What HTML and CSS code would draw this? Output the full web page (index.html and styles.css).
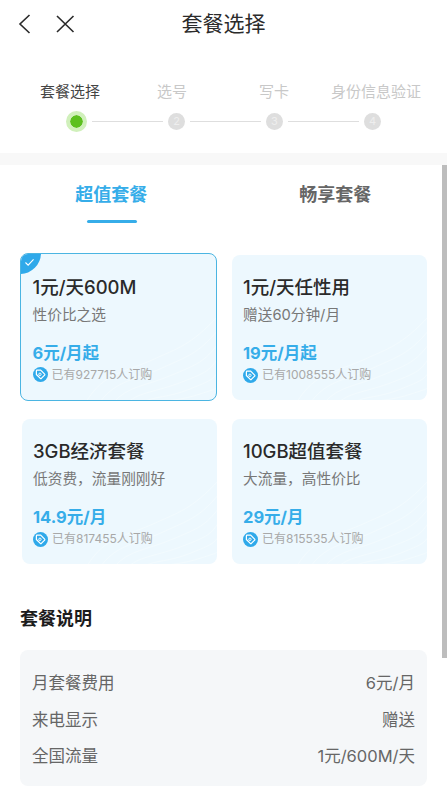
FILE: index.html
```html
<!DOCTYPE html>
<html lang="zh">
<head>
<meta charset="utf-8">
<title>套餐选择</title>
<link rel="stylesheet" href="styles.css">
</head>
<body>
<svg class="defs" width="0" height="0" aria-hidden="true">
  <symbol id="tag" viewBox="0 0 16 16">
    <circle cx="8" cy="8" r="8" fill="#2fa9ea"/>
    <path d="M8.2 3.4 12.4 7.6a.8.8 0 0 1 0 1.1L8.9 12.2a.8.8 0 0 1-1.1 0L3.6 8V4.2a.8.8 0 0 1 .8-.8z" fill="none" stroke="#fff" stroke-width="1.3" stroke-linejoin="round"/>
    <circle cx="7.4" cy="7.8" r="1.3" fill="none" stroke="#fff" stroke-width="1"/>
  </symbol>
  <symbol id="waves" viewBox="0 0 130 90">
    <g fill="none" stroke="#fff" stroke-width=".8">
      <path d="M0 92C18 62 40 62 66 50S104 36 132 6"/>
      <path d="M14 92C30 70 50 70 76 58S112 44 132 20"/>
      <path d="M28 92C42 76 60 76 86 65S118 52 132 34"/>
      <path d="M42 92C54 82 70 82 96 72S124 60 132 48"/>
      <path d="M58 92C68 86 82 88 104 79S126 70 132 62"/>
      <path d="M74 92C84 90 96 90 114 84S128 80 132 76"/>
    </g>
  </symbol>
</svg>

<header class="topbar">
  <div class="nav-icons">
    <svg class="nav-icon" viewBox="0 0 20 20" aria-label="返回"><path d="M14.500 1 5 10l9.500 9"/></svg>
    <svg class="nav-icon" viewBox="0 0 20 20" aria-label="关闭"><path d="M2 2 18.500 18M18.500 2 2 18"/></svg>
  </div>
  <h1 class="page-title">套餐选择</h1>
</header>

<section class="steps">
  <div class="step-labels">
    <span class="label label-active">套餐选择</span>
    <span class="label">选号</span>
    <span class="label">写卡</span>
    <span class="label">身份信息验证</span>
  </div>
  <div class="step-track">
    <span class="dot-active"></span>
    <span class="line"></span>
    <span class="dot">2</span>
    <span class="line"></span>
    <span class="dot">3</span>
    <span class="line"></span>
    <span class="dot">4</span>
  </div>
</section>

<div class="band"></div>

<main class="content">
  <nav class="tabs">
    <div class="tab tab-active">超值套餐</div>
    <div class="tab">畅享套餐</div>
  </nav>

  <section class="cards">
    <article class="card card-selected">
      <svg class="card-waves"><use href="#waves"/></svg>
      <span class="corner"><svg class="corner-check" viewBox="0 0 12 10"><path d="M1.500 5 4.500 8 10.500 1.500"/></svg></span>
      <h2 class="card-name">1元/天600M</h2>
      <p class="card-desc">性价比之选</p>
      <p class="card-price">6元/月起</p>
      <p class="card-sold"><svg class="tag"><use href="#tag"/></svg>已有927715人订购</p>
    </article>
    <article class="card">
      <svg class="card-waves"><use href="#waves"/></svg>
      <h2 class="card-name">1元/天任性用</h2>
      <p class="card-desc">赠送60分钟/月</p>
      <p class="card-price">19元/月起</p>
      <p class="card-sold"><svg class="tag"><use href="#tag"/></svg>已有1008555人订购</p>
    </article>
    <article class="card">
      <svg class="card-waves"><use href="#waves"/></svg>
      <h2 class="card-name">3GB经济套餐</h2>
      <p class="card-desc">低资费，流量刚刚好</p>
      <p class="card-price">14.9元/月</p>
      <p class="card-sold"><svg class="tag"><use href="#tag"/></svg>已有817455人订购</p>
    </article>
    <article class="card">
      <svg class="card-waves"><use href="#waves"/></svg>
      <h2 class="card-name">10GB超值套餐</h2>
      <p class="card-desc">大流量，高性价比</p>
      <p class="card-price">29元/月</p>
      <p class="card-sold"><svg class="tag"><use href="#tag"/></svg>已有815535人订购</p>
    </article>
  </section>

  <h2 class="section-title">套餐说明</h2>
  <section class="details">
    <div class="row"><span>月套餐费用</span><span>6元/月</span></div>
    <div class="row"><span>来电显示</span><span>赠送</span></div>
    <div class="row"><span>全国流量</span><span>1元/600M/天</span></div>
  </section>
</main>
<div class="scrollbar"></div>
</body>
</html>
```

FILE: styles.css
```css
* { box-sizing: border-box; }
html, body { margin: 0; padding: 0; height: 800px; overflow: hidden; background: #fff; }
body { font-family: Inter, "Noto Sans CJK SC", sans-serif; position: relative; color: #333; }
.defs { position: absolute; }
h1, h2, p { margin: 0; font-weight: normal; }

.topbar { position: relative; height: 48px; display: flex; align-items: center; justify-content: center; }
.nav-icons { position: absolute; left: 15px; top: 14px; display: flex; gap: 20px; }
.nav-icon { width: 20px; height: 20px; fill: none; stroke: #2a2a2a; stroke-width: 1.6; }
.page-title { font-size: 21px; line-height: 48px; color: #2b2b2b; }

.steps { height: 105px; padding-top: 33px; }
.step-labels { display: grid; grid-template-columns: repeat(4, 102px); padding-left: 19px; height: 22px; }
.label { font-size: 15px; line-height: 22px; color: #c8c8c8; white-space: nowrap; text-align: center; }
.label-active { color: #444; }
.step-track { display: flex; align-items: center; padding-left: 66px; margin-top: 8px; }
.dot-active { width: 21px; height: 21px; border-radius: 50%; background: #5cc01e; border: 4px solid #d0f0bb; flex: none; background-clip: padding-box; }
.dot { width: 17px; height: 17px; border-radius: 50%; background: #dedede; color: #eee; font-size: 11px; line-height: 17px; text-align: center; flex: none; }
.line { width: 71px; height: 1px; background: #dedede; margin: 0 5px; flex: none; }

.band { height: 12px; background: #f8f8f8; }

.content { padding: 0 20px; }
.tabs { display: grid; grid-template-columns: 1fr 1fr; height: 90px; margin: 0 -20px; }
.tab { position: relative; font-size: 18px; font-weight: 700; color: #666; text-align: center; line-height: 60px; }
.tab:first-child { padding-right: 1px; }
.tab-active { color: #36ade9; }
.tab-active::after { content: ""; position: absolute; left: 87px; top: 55px; width: 50px; height: 3px; border-radius: 2px; background: #36ade9; }

.cards { display: grid; grid-template-columns: 195px 195px; grid-auto-rows: 145px; column-gap: 15px; row-gap: 19px; padding-left: 2px; }
.card { position: relative; background: #edf8fe; border-radius: 8px; padding: 20px 11px 0; overflow: hidden; }
.card-selected { margin: -2px 0 -1px -2px; border: 1.5px solid #4bb5e2; padding: 20.5px 11.5px 0; }
.card-waves { position: absolute; right: 0; bottom: 0; width: 130px; height: 90px; opacity: .4; }
.corner { position: absolute; left: -1.5px; top: -1.5px; width: 21px; height: 21px; background: #2fa9ea; border-bottom-right-radius: 21px; display: flex; align-items: flex-start; padding: 5px 0 0 4px; }
.corner-check { width: 11px; height: 9px; fill: none; stroke: #fff; stroke-width: 1.2; }
.card-name { position: relative; font-size: 18.500px; line-height: 24px; font-weight: 500; color: #2a2a2a; white-space: nowrap; }
.card-desc { position: relative; margin-top: 5px; font-size: 14.700px; line-height: 22px; color: #777; white-space: nowrap; }
.card-price { position: relative; margin-top: 16px; font-size: 16.500px; line-height: 22px; font-weight: 700; color: #36ade9; white-space: nowrap; }
.card-sold { position: relative; margin-top: 2px; display: flex; align-items: center; gap: 4px; font-size: 12px; line-height: 18px; color: #a8a8a8; white-space: nowrap; }
.tag { width: 15px; height: 15px; flex: none; }

.section-title { margin-top: 41px; font-size: 18px; line-height: 28px; font-weight: 700; color: #1c1c1c; }
.details { margin-top: 17px; background: #f5f7f9; border-radius: 8px; height: 136px; padding: 15px 12px 0; width: 407px; }
.row { display: flex; justify-content: space-between; font-size: 16.500px; line-height: 36.500px; color: #666; }

.scrollbar { position: absolute; right: 0; top: 165px; width: 5px; height: 493px; background: #bdbdbd; }
```
